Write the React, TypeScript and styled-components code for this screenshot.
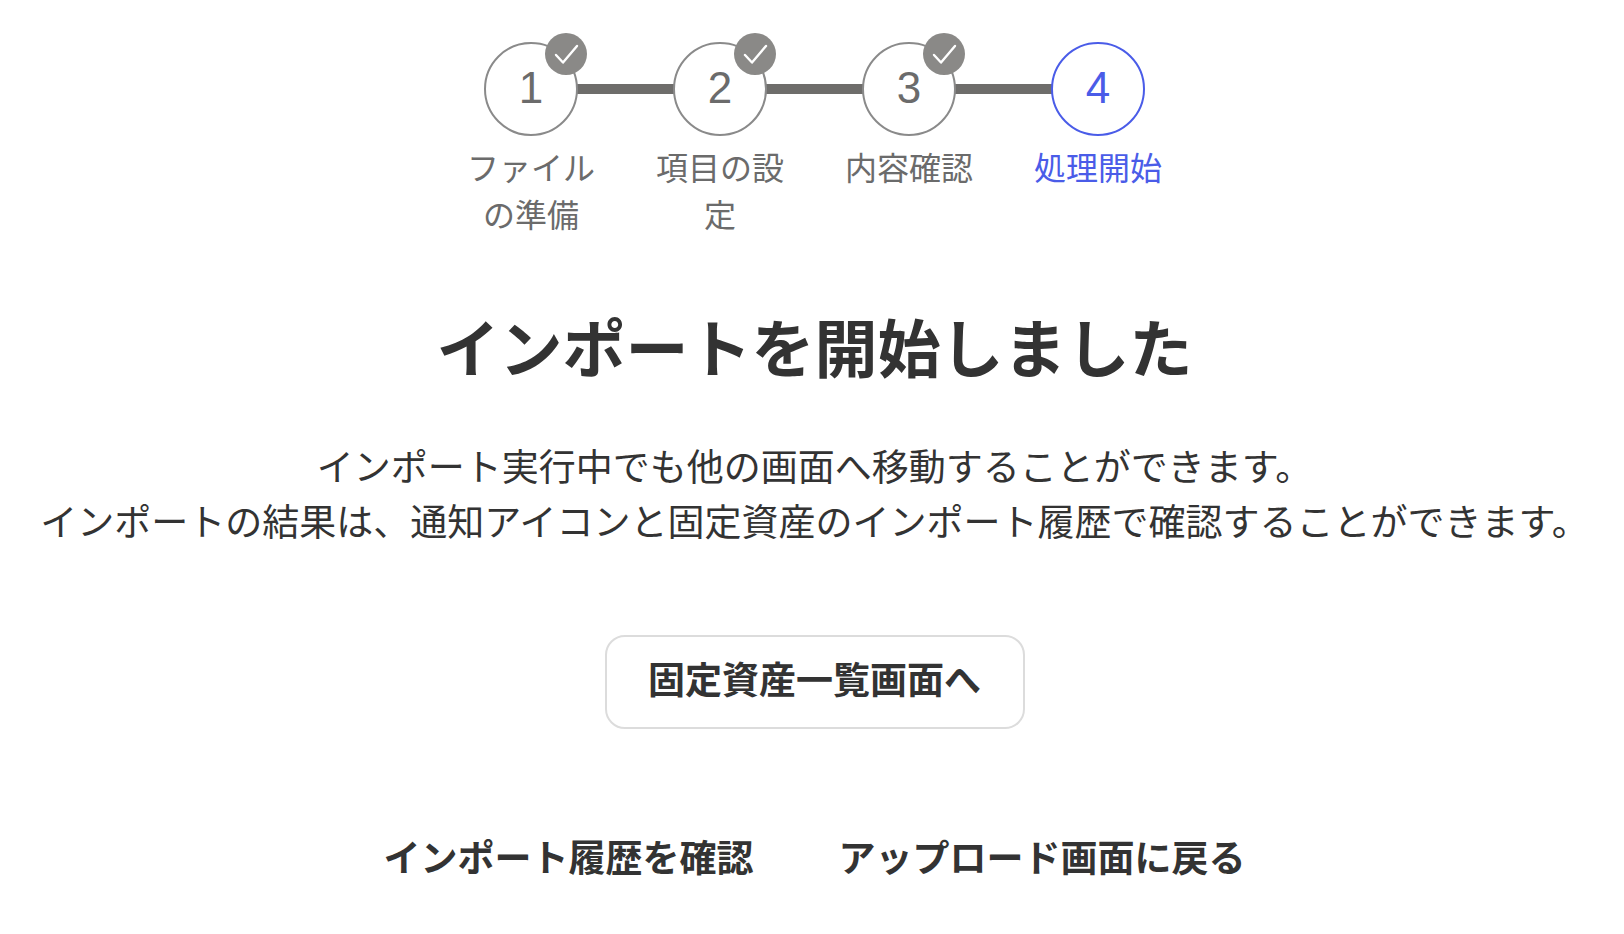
import styled, { createGlobalStyle } from 'styled-components';

const GlobalStyle = createGlobalStyle`
  html, body {
    margin: 0;
    padding: 0;
    background: #fff;
    font-family: "Liberation Sans", "Noto Sans CJK JP", sans-serif;
  }
`;

const Page = styled.div`
  width: 1624px;
  height: 934px;
  box-sizing: border-box;
  padding-left: 5px;
  display: flex;
  flex-direction: column;
  align-items: center;
  color: #333;
  overflow: hidden;
`;

const Steps = styled.ol`
  list-style: none;
  margin: 0;
  padding: 42px 0 0;
  display: flex;
  height: 250px;
  box-sizing: border-box;
`;

const Step = styled.li<{ $active?: boolean; $last?: boolean }>`
  position: relative;
  width: 189px;
  display: flex;
  flex-direction: column;
  align-items: center;
  color: ${p => (p.$active ? '#4a5ce8' : '#6b6b6b')};

  &::after {
    content: '';
    display: ${p => (p.$last ? 'none' : 'block')};
    position: absolute;
    top: 42px;
    left: 140px;
    width: 100px;
    height: 10px;
    background: #6e6d6b;
  }
`;

const Circle = styled.div<{ $active?: boolean }>`
  position: relative;
  width: 94px;
  height: 94px;
  box-sizing: border-box;
  border: 2px solid ${p => (p.$active ? '#4a5ce8' : '#8a8a8a')};
  border-radius: 50%;
  background: #fff;
  display: flex;
  align-items: center;
  justify-content: center;
  font-size: 44px;
  padding-bottom: 2px;
  z-index: 1;
`;

const Badge = styled.span`
  position: absolute;
  top: -11px;
  right: -11px;
  width: 42px;
  height: 42px;
  border-radius: 50%;
  background: #8a8987;
  display: flex;
  align-items: center;
  justify-content: center;
`;

const StepLabel = styled.div`
  margin-top: 10px;
  width: 130px;
  font-size: 32px;
  line-height: 46.5px;
  text-align: center;
`;

const Title = styled.h1`
  margin: 56px 0 0;
  font-size: 63px;
  line-height: 88px;
  font-weight: 700;
  color: #333;
`;

const Message = styled.p`
  margin: 47px 0 0;
  font-size: 37px;
  line-height: 55px;
  text-align: center;
  white-space: nowrap;
`;

const PrimaryButton = styled.button`
  margin-top: 84px;
  width: 420px;
  height: 94px;
  padding: 0 0 8px;
  background: #fff;
  border: 2px solid #dcdcdc;
  border-radius: 20px;
  font: 700 37px "Liberation Sans", "Noto Sans CJK JP", sans-serif;
  color: #333;
`;

const Links = styled.div`
  margin-top: 104px;
  display: flex;
  gap: 85px;
`;

const TextLink = styled.a`
  font-size: 37px;
  line-height: 54px;
  font-weight: 700;
  color: #333;
`;

const Check = () => (
  <svg width="42" height="42" viewBox="0 0 42 42" fill="none" stroke="#fff" strokeWidth="2.4" strokeLinecap="round" strokeLinejoin="round">
    <path d="M11 22l7 7.5L32 13" />
  </svg>
);

const stepData = [
  { n: 1, label: 'ファイルの準備', done: true },
  { n: 2, label: '項目の設定', done: true },
  { n: 3, label: '内容確認', done: true },
  { n: 4, label: '処理開始', done: false },
];

export default function App() {
  return (
    <Page>
      <GlobalStyle />
      <Steps>
        {stepData.map((s, i) => (
          <Step key={s.n} $active={!s.done} $last={i === stepData.length - 1}>
            <Circle $active={!s.done}>
              {s.n}
              {s.done && (
                <Badge>
                  <Check />
                </Badge>
              )}
            </Circle>
            <StepLabel>{s.label}</StepLabel>
          </Step>
        ))}
      </Steps>
      <Title>インポートを開始しました</Title>
      <Message>
        インポート実行中でも他の画面へ移動することができます。
        <br />
        インポートの結果は、通知アイコンと固定資産のインポート履歴で確認することができます。
      </Message>
      <PrimaryButton>固定資産一覧画面へ</PrimaryButton>
      <Links>
        <TextLink>インポート履歴を確認</TextLink>
        <TextLink>アップロード画面に戻る</TextLink>
      </Links>
    </Page>
  );
}
